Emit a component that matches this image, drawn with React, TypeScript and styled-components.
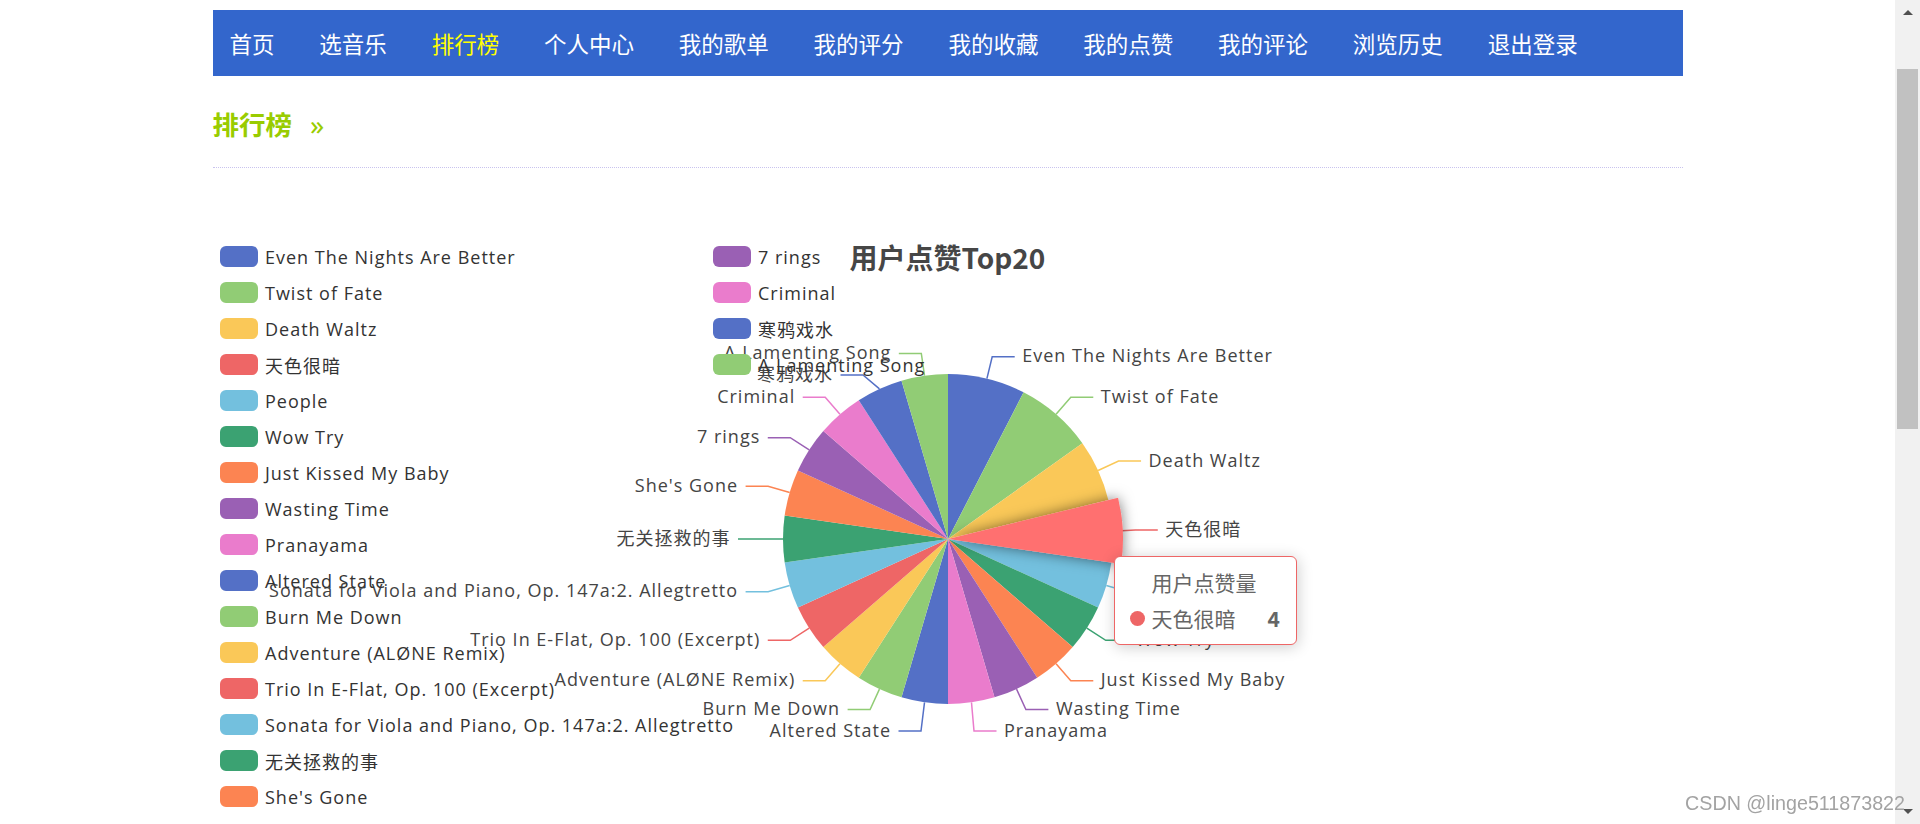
import React from 'react';
import styled, { createGlobalStyle } from 'styled-components';

const GlobalStyle = createGlobalStyle`
  html, body {
    margin: 0;
    padding: 0;
    overflow: hidden;
    background: #fff;
    font-family: "Noto Sans CJK SC", "Noto Sans", sans-serif;
  }
`;

const PALETTE = ['#5470c6', '#91cc75', '#fac858', '#ee6666', '#73c0de', '#3ba272', '#fc8452', '#9a60b4', '#ea7ccc'];

const SONGS: [string, number][] = [
  ['Even The Nights Are Better', 5],
  ['Twist of Fate', 5],
  ['Death Waltz', 4],
  ['天色很暗', 4],
  ['People', 3],
  ['Wow Try', 3],
  ['Just Kissed My Baby', 3],
  ['Wasting Time', 3],
  ['Pranayama', 3],
  ['Altered State', 3],
  ['Burn Me Down', 3],
  ['Adventure (ALØNE Remix)', 3],
  ['Trio In E-Flat, Op. 100 (Excerpt)', 3],
  ['Sonata for Viola and Piano, Op. 147a:2. Allegtretto', 3],
  ['无关拯救的事', 3],
  ["She's Gone", 3],
  ['7 rings', 3],
  ['Criminal', 3],
  ['寒鸦戏水', 3],
  ['A Lamenting Song', 3],
];

const NAV = ['首页', '选音乐', '排行榜', '个人中心', '我的歌单', '我的评分', '我的收藏', '我的点赞', '我的评论', '浏览历史', '退出登录'];

// pie geometry (chart box coords)
const CX = 735;
const CY = 300;
const R = 165;
const HOVER = 3;
// labels that echarts pushed around to avoid overlap
const BEND_FIX: Record<number, [number, number]> = {
  8: [761, 492],
  9: [708, 492],
  18: [650, 136],
};

const polar = (r: number, a: number): [number, number] => [CX + r * Math.sin(a), CY - r * Math.cos(a)];

const total = SONGS.reduce((s, d) => s + d[1], 0);

const slices = (() => {
  let acc = 0;
  return SONGS.map(([name, value], i) => {
    const a0 = (acc / total) * Math.PI * 2;
    acc += value;
    const a1 = (acc / total) * Math.PI * 2;
    const mid = (a0 + a1) / 2;
    const r = i === HOVER ? 175 : R;
    const p0 = polar(r, a0);
    const p1 = polar(r, a1);
    const large = a1 - a0 > Math.PI ? 1 : 0;
    const d = `M${CX},${CY} L${p0[0]},${p0[1]} A${r},${r} 0 ${large} 1 ${p1[0]},${p1[1]} Z`;
    const edge = polar(R, mid);
    const bend = BEND_FIX[i] || polar(R + 22.5, mid);
    const right = Math.sin(mid) > 0;
    const end: [number, number] = [bend[0] + (right ? 22.5 : -22.5), bend[1]];
    const textX = end[0] + (right ? 7.5 : -7.5);
    return {
      name,
      value,
      d,
      color: i === HOVER ? '#ff7070' : PALETTE[i % PALETTE.length],
      lineColor: PALETTE[i % PALETTE.length],
      line: `${edge[0]},${edge[1]} ${bend[0]},${bend[1]} ${end[0]},${end[1]}`,
      textX,
      textY: end[1] - 1.5,
      right,
    };
  });
})();

const App = () => {
  return (
    <>
      <GlobalStyle />
      <Screen>
        <Page>
          <NavBar>
            {NAV.map((n) => (
              <NavItem key={n} $active={n === '排行榜'}>{n}</NavItem>
            ))}
          </NavBar>
          <SectionHead>
            <SectionTitle>排行榜</SectionTitle>
            <Chevrons>»</Chevrons>
          </SectionHead>
          <ChartBox>
            <PieSvg width={1470} height={600} viewBox="0 0 1470 600">
              <defs>
                <filter id="hoverShadow" x="-50%" y="-50%" width="200%" height="200%">
                  <feDropShadow dx="0" dy="0" stdDeviation="7" floodColor="#000" floodOpacity="0.5" />
                </filter>
              </defs>
              {slices.map((s, i) =>
                i === HOVER ? null : <path key={s.name} d={s.d} fill={s.color} />
              )}
              {slices.map((s) => (
                <polyline key={s.name + '-l'} points={s.line} fill="none" stroke={s.lineColor} strokeWidth={1.5} />
              ))}
              <path d={slices[HOVER].d} fill={slices[HOVER].color} filter="url(#hoverShadow)" />
              {slices.map((s) => (
                <text
                  key={s.name + '-t'}
                  x={s.textX}
                  y={s.textY}
                  textAnchor={s.right ? 'start' : 'end'}
                  dominantBaseline="central"
                >
                  {s.name}
                </text>
              ))}
            </PieSvg>
            <Legend>
              {SONGS.map(([name], i) => (
                <LegendItem key={name}>
                  <Swatch $color={PALETTE[i % PALETTE.length]} />
                  <span>{name}</span>
                </LegendItem>
              ))}
            </Legend>
            <ChartTitle>用户点赞Top20</ChartTitle>
            <Tooltip>
              <TipHead>用户点赞量</TipHead>
              <TipRow>
                <TipDot />
                <TipName>天色很暗</TipName>
                <TipValue>4</TipValue>
              </TipRow>
            </Tooltip>
          </ChartBox>
        </Page>
        <ScrollTrack>
          <ArrowBtn $up />
          <Thumb />
          <TrackFill />
          <ArrowBtn />
        </ScrollTrack>
      </Screen>
      <Watermark>CSDN @linge511873822</Watermark>
    </>
  );
};

const Screen = styled.div`
  display: flex;
  width: 1920px;
  height: 824px;
  overflow: hidden;
`;

const Page = styled.div`
  width: 1895px;
  display: flex;
  flex-direction: column;
  align-items: center;
`;

const NavBar = styled.nav`
  width: 1470px;
  height: 66px;
  margin-top: 10px;
  background: #3366cc;
  display: flex;
  align-items: center;
  padding-left: 17px;
  gap: 44.8px;
  box-sizing: border-box;
`;

const NavItem = styled.a<{ $active?: boolean }>`
  font-size: 22.5px;
  line-height: 66px;
  color: ${(p) => (p.$active ? '#ffff00' : '#ffffff')};
  text-decoration: none;
  cursor: pointer;
`;

const SectionHead = styled.div`
  width: 1470px;
  display: flex;
  align-items: center;
  gap: 18px;
  padding: 29px 0 24px;
  border-bottom: 1.5px dotted #c9c3ee;
`;

const SectionTitle = styled.h2`
  margin: 0;
  font-size: 26.5px;
  line-height: 38px;
  font-weight: 700;
  color: #99cc00;
`;

const Chevrons = styled.span`
  font-size: 28px;
  line-height: 38px;
  color: #99cc00;
  font-family: "Noto Sans", sans-serif;
`;

const ChartBox = styled.div`
  position: relative;
  margin-top: 71px;
  width: 1470px;
  height: 600px;
  display: grid;
  flex-shrink: 0;
  & > * {
    grid-area: 1 / 1;
  }
`;

const PieSvg = styled.svg`
  display: block;
  text {
    font-family: "Open Sans", "Noto Sans CJK SC", sans-serif;
    font-size: 18px;
    letter-spacing: 1px;
    fill: #444;
  }
`;

const Legend = styled.div`
  padding: 7px 7.5px;
  display: grid;
  grid-template-rows: repeat(16, 21px);
  grid-auto-flow: column;
  grid-auto-columns: 493px;
  row-gap: 15px;
  align-self: start;
  justify-self: start;
`;

const LegendItem = styled.div`
  display: flex;
  align-items: center;
  gap: 7.5px;
  height: 21px;
  white-space: nowrap;
  font-family: "Open Sans", "Noto Sans CJK SC", sans-serif;
  font-size: 18px;
  letter-spacing: 1px;
  color: #333;
`;

const Swatch = styled.i<{ $color: string }>`
  display: block;
  width: 37.5px;
  height: 21px;
  border-radius: 6px;
  background: ${(p) => p.$color};
  flex-shrink: 0;
`;

const ChartTitle = styled.div`
  justify-self: center;
  align-self: start;
  padding-top: 4px;
  font-size: 28px;
  line-height: 28px;
  font-weight: 700;
  color: #464646;
  font-family: "Noto Sans CJK SC", sans-serif;
`;

const Tooltip = styled.div`
  position: absolute;
  left: 901px;
  top: 317px;
  background: #fff;
  border: 1px solid #ee6666;
  border-radius: 6px;
  padding: 15px 16px 15px 15px;
  box-shadow: 1px 2px 15px rgba(0, 0, 0, 0.2);
  font-family: "Noto Sans CJK SC", sans-serif;
  font-size: 21px;
  line-height: 21px;
  color: #666;
`;

const TipHead = styled.div`
  padding-left: 22px;
`;

const TipRow = styled.div`
  display: flex;
  align-items: center;
  margin-top: 15px;
`;

const TipDot = styled.span`
  width: 15px;
  height: 15px;
  border-radius: 50%;
  background: #ee6666;
  margin-right: 7px;
`;

const TipName = styled.span``;

const TipValue = styled.span`
  margin-left: 32px;
  font-weight: 700;
`;

const ScrollTrack = styled.div`
  width: 25px;
  height: 824px;
  background: #f1f1f1;
  display: flex;
  flex-direction: column;
  align-items: center;
`;

const ArrowBtn = styled.div<{ $up?: boolean }>`
  width: 25px;
  height: 25px;
  display: flex;
  align-items: center;
  justify-content: center;
  &::after {
    content: '';
    border-left: 5px solid transparent;
    border-right: 5px solid transparent;
    ${(p) => (p.$up ? 'border-bottom: 5px solid #505050;' : 'border-top: 5px solid #505050;')}
  }
`;

const Thumb = styled.div`
  width: 21px;
  height: 360px;
  margin-top: 44px;
  background: #c1c1c1;
`;

const TrackFill = styled.div`
  flex: 1;
`;

const Watermark = styled.div`
  position: fixed;
  right: 15px;
  bottom: 10px;
  font-family: "Liberation Sans", Arial, sans-serif;
  font-size: 19.7px;
  line-height: 22px;
  color: #a3a3a3;
  pointer-events: none;
`;

export default App;
